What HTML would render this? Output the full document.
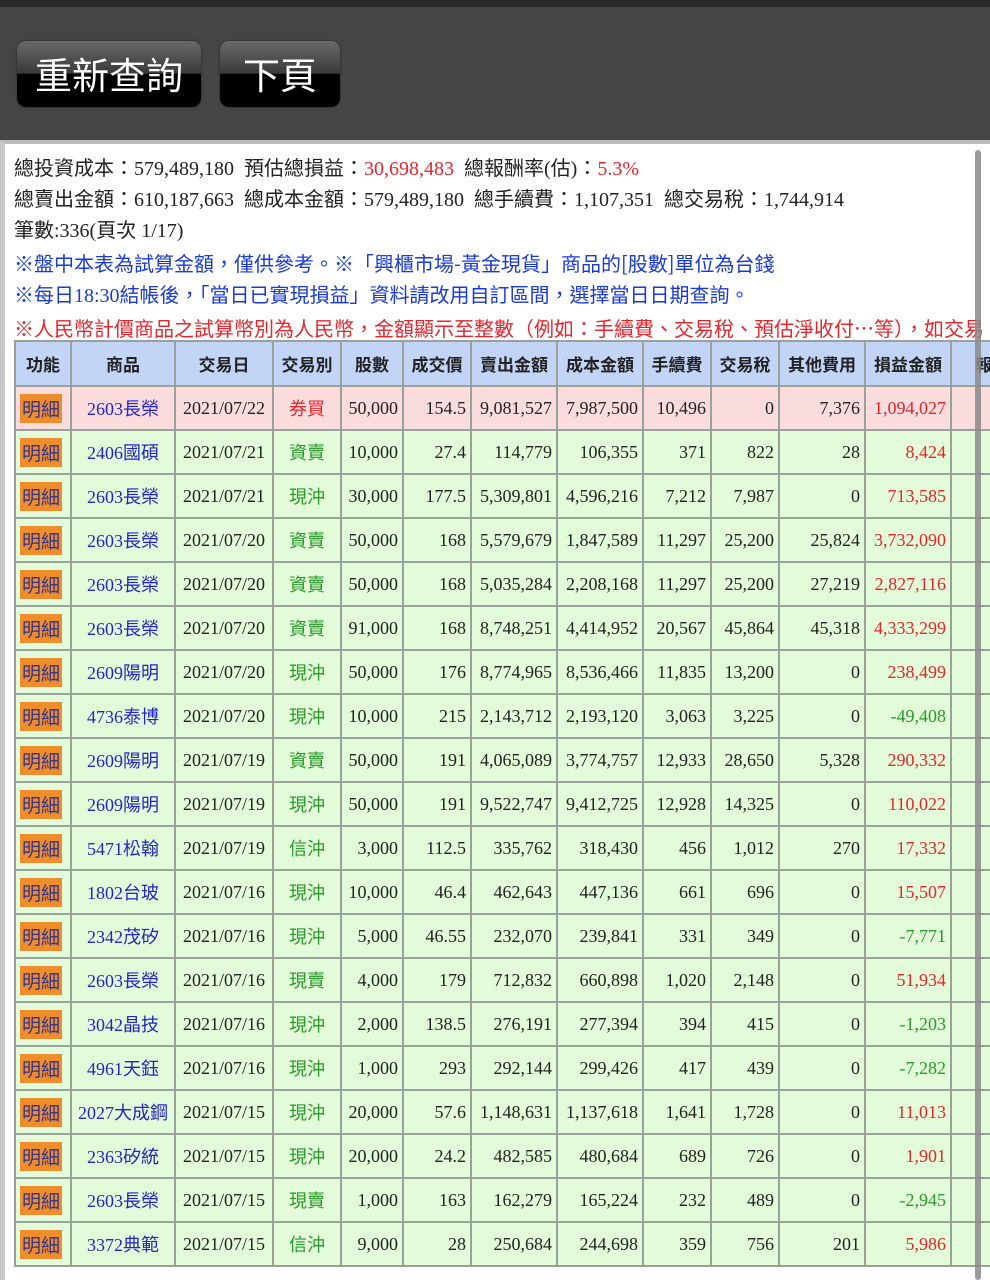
<!DOCTYPE html>
<html><head><meta charset="utf-8"><style>
body{margin:0;width:990px;height:1280px;overflow:hidden;background:#fff;font-family:"Liberation Serif","Noto Sans CJK TC",serif;}
.top{position:absolute;left:0;top:0;width:990px;height:140px;background:#454545;border-top:7px solid #2a2a2a;box-sizing:border-box;}
.btn{position:absolute;top:34px;height:66px;border-radius:9px;background:linear-gradient(#6a6a6a 0%,#3a3a3a 49%,#000 50%,#000 100%);box-shadow:0 0 2px #222;color:#fff;font-family:"Noto Sans CJK TC",sans-serif;font-size:37px;line-height:64px;text-align:center;}
.panel{position:absolute;left:0;top:140px;width:990px;height:1140px;background:#fff;border-left:5px solid #c8c8c8;border-top:4px solid #bbb;box-sizing:border-box;}
.info{position:absolute;left:14px;top:154px;font-size:20px;line-height:31px;color:#222;white-space:nowrap;}
.r{color:#e8242c}.b{color:#1a3ad8}.g{color:#2a9a2a}
.info .s{font-family:"Noto Sans CJK TC",sans-serif}
.wrap{position:absolute;left:14px;top:340px;width:976px;overflow:hidden;}
table{border-collapse:collapse;table-layout:fixed;width:1036px;font-size:18px;}
td,th{border:2px solid #9aa09a;height:42px;padding:0 4px;white-space:nowrap;overflow:hidden;}
th{background:#c3d5f7;font-family:"Noto Sans CJK TC",sans-serif;font-size:17px;font-weight:bold;color:#222;height:43px;}
td{text-align:right;color:#222;background:#e2fbd8;}
tr.p td{background:#fadcdc;}
td.c{text-align:center}
td.n{text-align:center;color:#2424c8}
td.t{text-align:center;color:#2a9a2a;font-family:"Noto Sans CJK TC",sans-serif}
td.t.r{color:#e8242c}
td.pl{color:#e8242c}td.ng{color:#2a9a2a}
.m{display:inline-block;background:#ef8c2c;color:#33348a;font-family:"Noto Sans CJK TC",sans-serif;font-size:19px;padding:1px 2px;line-height:27px;}
td.f{padding:0 0 0 4px;text-align:left}
.sb{position:absolute;left:975px;top:150px;width:6px;height:1130px;background:#8a8a8a;border-radius:3px;opacity:.85}
</style></head><body>
<div class="top">
<div class="btn" style="left:17px;width:184px;">重新查詢</div>
<div class="btn" style="left:220px;width:120px;">下頁</div>
</div>
<div class="panel"></div>
<div class="info">
<div>總投資成本：579,489,180&nbsp; 預估總損益：<span class="r">30,698,483</span>&nbsp; 總報酬率(估)：<span class="r">5.3%</span></div>
<div>總賣出金額：610,187,663&nbsp; 總成本金額：579,489,180&nbsp; 總手續費：1,107,351&nbsp; 總交易稅：1,744,914</div>
<div>筆數:336(頁次 1/17)</div>
<div class="b s">※盤中本表為試算金額，僅供參考。※「興櫃市場-黃金現貨」商品的[股數]單位為台錢</div>
<div class="b s">※每日<span style="font-family:'Liberation Serif'">18:30</span>結帳後，「當日已實現損益」資料請改用自訂區間，選擇當日日期查詢。</div>
<div class="r s">※人民幣計價商品之試算幣別為人民幣，金額顯示至整數（例如：手續費、交易稅、預估淨收付…等），如交易</div>
</div>
<div class="wrap"><table>
<colgroup><col style="width:56px"><col style="width:104px"><col style="width:98px"><col style="width:68px"><col style="width:62px"><col style="width:68px"><col style="width:86px"><col style="width:86px"><col style="width:68px"><col style="width:68px"><col style="width:86px"><col style="width:86px"><col style="width:100px"></colgroup>
<tr><th>功能</th><th>商品</th><th>交易日</th><th>交易別</th><th>股數</th><th>成交價</th><th>賣出金額</th><th>成本金額</th><th>手續費</th><th>交易稅</th><th>其他費用</th><th>損益金額</th><th>報酬率</th></tr>
<tr class="p"><td class="f"><span class="m">明細</span></td><td class="n">2603長榮</td><td class="c">2021/07/22</td><td class="t r">券買</td><td>50,000</td><td>154.5</td><td>9,081,527</td><td>7,987,500</td><td>10,496</td><td>0</td><td>7,376</td><td class="pl">1,094,027</td><td class="pl">13.69%</td></tr>
<tr><td class="f"><span class="m">明細</span></td><td class="n">2406國碩</td><td class="c">2021/07/21</td><td class="t">資賣</td><td>10,000</td><td>27.4</td><td>114,779</td><td>106,355</td><td>371</td><td>822</td><td>28</td><td class="pl">8,424</td><td class="pl">7.92%</td></tr>
<tr><td class="f"><span class="m">明細</span></td><td class="n">2603長榮</td><td class="c">2021/07/21</td><td class="t">現沖</td><td>30,000</td><td>177.5</td><td>5,309,801</td><td>4,596,216</td><td>7,212</td><td>7,987</td><td>0</td><td class="pl">713,585</td><td class="pl">15.52%</td></tr>
<tr><td class="f"><span class="m">明細</span></td><td class="n">2603長榮</td><td class="c">2021/07/20</td><td class="t">資賣</td><td>50,000</td><td>168</td><td>5,579,679</td><td>1,847,589</td><td>11,297</td><td>25,200</td><td>25,824</td><td class="pl">3,732,090</td><td class="pl">202.0%</td></tr>
<tr><td class="f"><span class="m">明細</span></td><td class="n">2603長榮</td><td class="c">2021/07/20</td><td class="t">資賣</td><td>50,000</td><td>168</td><td>5,035,284</td><td>2,208,168</td><td>11,297</td><td>25,200</td><td>27,219</td><td class="pl">2,827,116</td><td class="pl">128.0%</td></tr>
<tr><td class="f"><span class="m">明細</span></td><td class="n">2603長榮</td><td class="c">2021/07/20</td><td class="t">資賣</td><td>91,000</td><td>168</td><td>8,748,251</td><td>4,414,952</td><td>20,567</td><td>45,864</td><td>45,318</td><td class="pl">4,333,299</td><td class="pl">98.15%</td></tr>
<tr><td class="f"><span class="m">明細</span></td><td class="n">2609陽明</td><td class="c">2021/07/20</td><td class="t">現沖</td><td>50,000</td><td>176</td><td>8,774,965</td><td>8,536,466</td><td>11,835</td><td>13,200</td><td>0</td><td class="pl">238,499</td><td class="pl"></td></tr>
<tr><td class="f"><span class="m">明細</span></td><td class="n">4736泰博</td><td class="c">2021/07/20</td><td class="t">現沖</td><td>10,000</td><td>215</td><td>2,143,712</td><td>2,193,120</td><td>3,063</td><td>3,225</td><td>0</td><td class="ng">-49,408</td><td></td></tr>
<tr><td class="f"><span class="m">明細</span></td><td class="n">2609陽明</td><td class="c">2021/07/19</td><td class="t">資賣</td><td>50,000</td><td>191</td><td>4,065,089</td><td>3,774,757</td><td>12,933</td><td>28,650</td><td>5,328</td><td class="pl">290,332</td><td></td></tr>
<tr><td class="f"><span class="m">明細</span></td><td class="n">2609陽明</td><td class="c">2021/07/19</td><td class="t">現沖</td><td>50,000</td><td>191</td><td>9,522,747</td><td>9,412,725</td><td>12,928</td><td>14,325</td><td>0</td><td class="pl">110,022</td><td></td></tr>
<tr><td class="f"><span class="m">明細</span></td><td class="n">5471松翰</td><td class="c">2021/07/19</td><td class="t">信沖</td><td>3,000</td><td>112.5</td><td>335,762</td><td>318,430</td><td>456</td><td>1,012</td><td>270</td><td class="pl">17,332</td><td></td></tr>
<tr><td class="f"><span class="m">明細</span></td><td class="n">1802台玻</td><td class="c">2021/07/16</td><td class="t">現沖</td><td>10,000</td><td>46.4</td><td>462,643</td><td>447,136</td><td>661</td><td>696</td><td>0</td><td class="pl">15,507</td><td></td></tr>
<tr><td class="f"><span class="m">明細</span></td><td class="n">2342茂矽</td><td class="c">2021/07/16</td><td class="t">現沖</td><td>5,000</td><td>46.55</td><td>232,070</td><td>239,841</td><td>331</td><td>349</td><td>0</td><td class="ng">-7,771</td><td></td></tr>
<tr><td class="f"><span class="m">明細</span></td><td class="n">2603長榮</td><td class="c">2021/07/16</td><td class="t">現賣</td><td>4,000</td><td>179</td><td>712,832</td><td>660,898</td><td>1,020</td><td>2,148</td><td>0</td><td class="pl">51,934</td><td></td></tr>
<tr><td class="f"><span class="m">明細</span></td><td class="n">3042晶技</td><td class="c">2021/07/16</td><td class="t">現沖</td><td>2,000</td><td>138.5</td><td>276,191</td><td>277,394</td><td>394</td><td>415</td><td>0</td><td class="ng">-1,203</td><td></td></tr>
<tr><td class="f"><span class="m">明細</span></td><td class="n">4961天鈺</td><td class="c">2021/07/16</td><td class="t">現沖</td><td>1,000</td><td>293</td><td>292,144</td><td>299,426</td><td>417</td><td>439</td><td>0</td><td class="ng">-7,282</td><td></td></tr>
<tr><td class="f"><span class="m">明細</span></td><td class="n" style="padding:0 2px">2027大成鋼</td><td class="c">2021/07/15</td><td class="t">現沖</td><td>20,000</td><td>57.6</td><td>1,148,631</td><td>1,137,618</td><td>1,641</td><td>1,728</td><td>0</td><td class="pl">11,013</td><td></td></tr>
<tr><td class="f"><span class="m">明細</span></td><td class="n">2363矽統</td><td class="c">2021/07/15</td><td class="t">現沖</td><td>20,000</td><td>24.2</td><td>482,585</td><td>480,684</td><td>689</td><td>726</td><td>0</td><td class="pl">1,901</td><td></td></tr>
<tr><td class="f"><span class="m">明細</span></td><td class="n">2603長榮</td><td class="c">2021/07/15</td><td class="t">現賣</td><td>1,000</td><td>163</td><td>162,279</td><td>165,224</td><td>232</td><td>489</td><td>0</td><td class="ng">-2,945</td><td></td></tr>
<tr><td class="f"><span class="m">明細</span></td><td class="n">3372典範</td><td class="c">2021/07/15</td><td class="t">信沖</td><td>9,000</td><td>28</td><td>250,684</td><td>244,698</td><td>359</td><td>756</td><td>201</td><td class="pl">5,986</td><td></td></tr>
</table></div>
<div class="sb"></div>
</body></html>
